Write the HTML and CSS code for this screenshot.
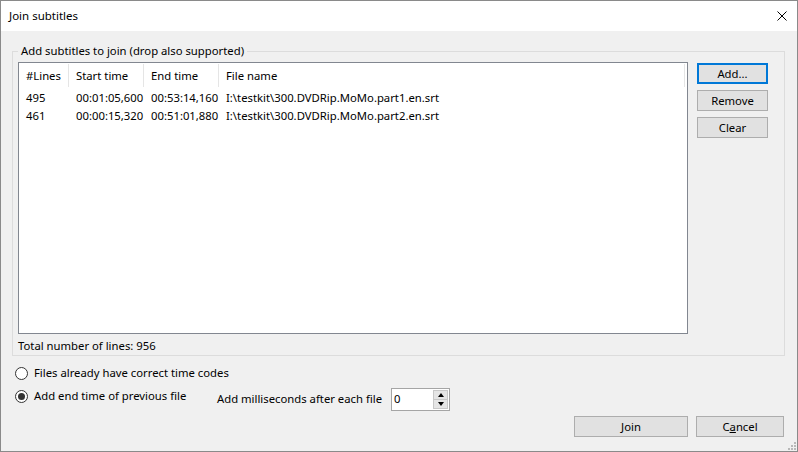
FILE: index.html
```
<!DOCTYPE html>
<html lang="en">
<head>
  <meta charset="UTF-8" />
  <title>Join subtitles</title>
  <link rel="stylesheet" href="styles.css">
</head>
<body>
  <div class="window">
    <div class="titlebar">
      <div class="title">Join subtitles</div>
      <div class="close">
        <svg width="10" height="10" viewBox="0 0 10 10"><path d="M0.5 0.5L9.5 9.5M9.5 0.5L0.5 9.5" stroke="#000" stroke-width="1" fill="none"/></svg>
      </div>
    </div>
    <div class="client">
      <fieldset class="group">
        <legend>Add subtitles to join (drop also supported)</legend>
        <div class="group-row">
          <div class="listview">
            <table>
              <thead>
                <tr>
                  <th class="c-lines">#Lines</th>
                  <th class="c-time">Start time</th>
                  <th class="c-time">End time</th>
                  <th class="c-name">File name</th>
                </tr>
              </thead>
              <tbody>
                <tr>
                  <td>495</td>
                  <td>00:01:05,600</td>
                  <td>00:53:14,160</td>
                  <td>I:\testkit\300.DVDRip.MoMo.part1.en.srt</td>
                </tr>
                <tr>
                  <td>461</td>
                  <td>00:00:15,320</td>
                  <td>00:51:01,880</td>
                  <td>I:\testkit\300.DVDRip.MoMo.part2.en.srt</td>
                </tr>
              </tbody>
            </table>
          </div>
          <div class="side-buttons">
            <div class="btn btn-default">Add...</div>
            <div class="btn">Remove</div>
            <div class="btn">Clear</div>
          </div>
        </div>
        <div class="total">Total number of lines: 956</div>
      </fieldset>

      <div class="options">
        <div class="option-row">
          <div class="radio-label"><span class="radio"></span>Files already have correct time codes</div>
        </div>
        <div class="option-row second">
          <div class="radio-label wide"><span class="radio checked"></span>Add end time of previous file</div>
          <div class="ms-label">Add milliseconds after each file</div>
          <div class="spin">
            <div class="spin-value">0</div>
            <div class="spin-buttons">
              <div class="spin-btn"><span class="arrow-up"></span></div>
              <div class="spin-btn"><span class="arrow-down"></span></div>
            </div>
          </div>
        </div>
      </div>

      <div class="dialog-buttons">
        <div class="btn btn-join">Join</div>
        <div class="btn btn-cancel">C<u>a</u>ncel</div>
      </div>

      <div class="grip">
        <svg width="8" height="8" viewBox="0 0 8 8" fill="#b8b8b8">
          <rect x="6" y="0" width="2" height="2"/>
          <rect x="3" y="3" width="2" height="2"/>
          <rect x="6" y="3" width="2" height="2"/>
          <rect x="0" y="6" width="2" height="2"/>
          <rect x="3" y="6" width="2" height="2"/>
          <rect x="6" y="6" width="2" height="2"/>
        </svg>
      </div>
    </div>
  </div>
</body>
</html>
```

FILE: styles.css
```
body {
  margin: 0;
  font-family: "Noto Sans", "Open Sans", sans-serif;
  font-size: 11.3px;
  line-height: 16px;
  color: #000;
  background: #fff;
}
.window {
  width: 798px;
  height: 452px;
  box-sizing: border-box;
  border: 1px solid #8a8a8a;
  display: flex;
  flex-direction: column;
}
.titlebar {
  height: 30px;
  background: #fff;
  display: flex;
  align-items: center;
  justify-content: space-between;
  padding: 0 9px 0 8px;
  flex: none;
}
.title {
  font-size: 11.5px;
}
.close {
  display: flex;
  align-items: center;
  padding-right: 1px;
}
.client {
  flex: 1;
  background: #f0f0f0;
  padding: 12px 12px 0 11px;
  position: relative;
  white-space: nowrap;
}
.group {
  margin: 0;
  padding: 3px 5px 1px;
  border: 1px solid #dcdcdc;
  min-width: 0;
}
.group legend {
  padding: 0 3px;
  line-height: 16px;
}
.group-row {
  display: flex;
  gap: 9px;
}
.listview {
  width: 670px;
  height: 272px;
  box-sizing: border-box;
  border: 1px solid #828790;
  background: #fff;
  flex: none;
}
.listview table {
  border-collapse: collapse;
  table-layout: fixed;
  width: 666px;
}
.listview th {
  font-weight: normal;
  text-align: left;
  height: 26px;
  padding: 0 0 0 6px;
  background: linear-gradient(#e5e5e5, #e5e5e5) right 1px top 1px / 1px 23px no-repeat;
}
.listview th.c-lines {
  width: 44px;
  padding-left: 7px;
}
.listview th.c-time {
  width: 69px;
}
.listview th.c-name {
  width: 460px;
}
.listview td {
  height: 18px;
  padding: 0 0 0 6px;
}
.listview td:first-child {
  padding-left: 7px;
}
.side-buttons {
  display: flex;
  flex-direction: column;
  gap: 6px;
  padding-top: 1px;
}
.btn {
  box-sizing: border-box;
  width: 71px;
  height: 21px;
  background: #e1e1e1;
  border: 1px solid #adadad;
  display: flex;
  align-items: center;
  justify-content: center;
}
.btn-default {
  border-color: #0078d7;
  box-shadow: inset 0 0 0 1px #0078d7;
}
.total {
  margin-top: 4px;
}
.options {
  padding: 8px 0 0 3px;
  display: flex;
  flex-direction: column;
  gap: 6px;
}
.option-row {
  display: flex;
  align-items: flex-start;
}
.radio-label {
  display: flex;
  align-items: center;
  margin-top: 1px;
}
.radio-label.wide {
  width: 202px;
}
.radio {
  width: 13px;
  height: 13px;
  box-sizing: border-box;
  border: 1px solid #333;
  border-radius: 50%;
  background: #fff;
  margin-right: 6px;
  position: relative;
}
.radio.checked::after {
  content: "";
  position: absolute;
  left: 2px;
  top: 2px;
  width: 7px;
  height: 7px;
  border-radius: 50%;
  background: #333;
}
.ms-label {
  width: 174px;
  margin-top: 4px;
}
.spin {
  width: 59px;
  height: 23px;
  margin-top: 1px;
  box-sizing: border-box;
  border: 1px solid #a5a5a5;
  background: #fff;
  display: flex;
}
.spin-value {
  flex: 1;
  padding: 2px 0 0 2px;
}
.spin-buttons {
  width: 15px;
  display: flex;
  flex-direction: column;
  padding: 1px 1px 1px 0;
}
.spin-btn {
  flex: 1;
  background: #e5e5e5;
  border: 1px solid #c8c8c8;
  display: flex;
  align-items: center;
  justify-content: center;
}
.spin-btn + .spin-btn {
  border-top: none;
}
.arrow-up {
  border-left: 3px solid transparent;
  border-right: 3px solid transparent;
  border-bottom: 4px solid #000;
}
.arrow-down {
  border-left: 3px solid transparent;
  border-right: 3px solid transparent;
  border-top: 4px solid #000;
}
.dialog-buttons {
  display: flex;
  justify-content: flex-end;
  gap: 8px;
  margin-top: 5px;
  padding-right: 1px;
}
.btn-join {
  width: 114px;
}
.btn-cancel {
  width: 88px;
}
.grip {
  position: absolute;
  right: 1px;
  bottom: 1px;
  line-height: 0;
}
```
